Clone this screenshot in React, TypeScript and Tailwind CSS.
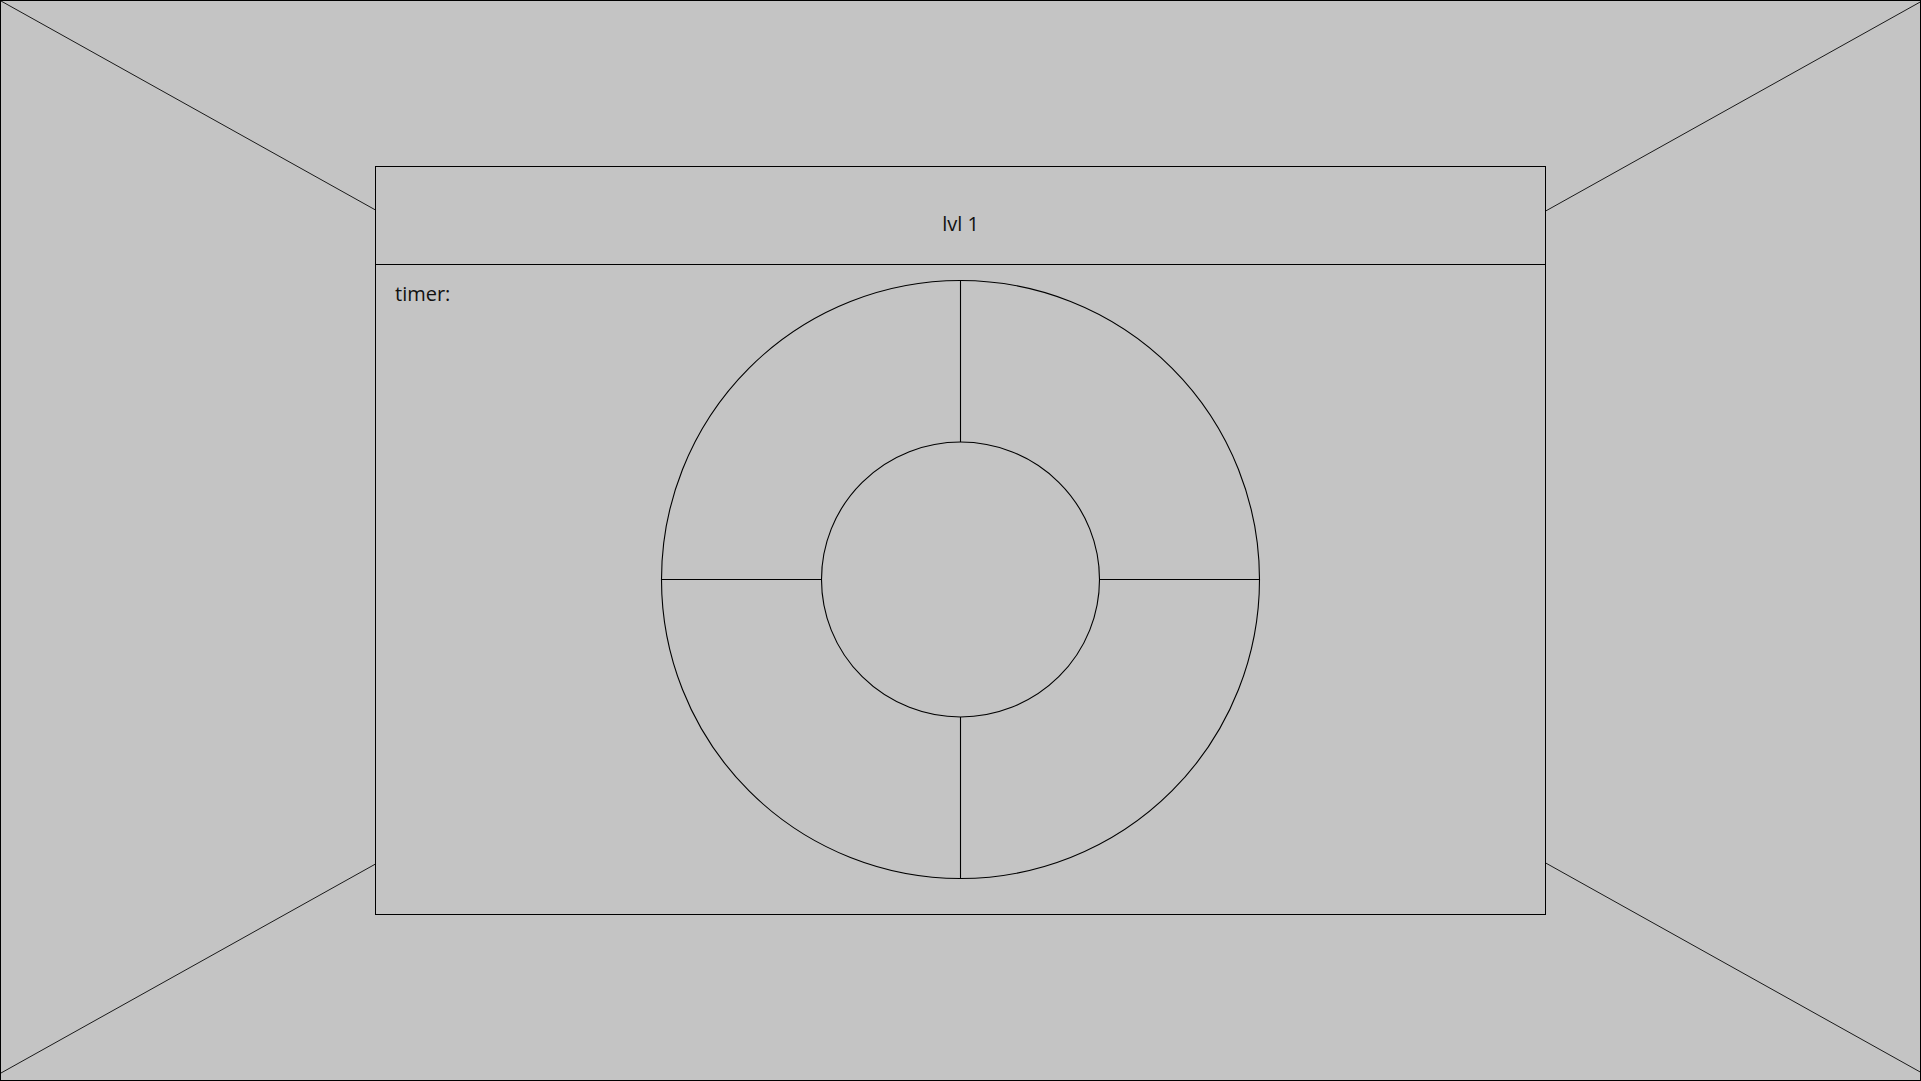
import React from 'react';

// wireframe: outer frame with perspective lines, level panel with a dial
const Backdrop: React.FC = () => (
  <svg
    className="absolute inset-0 pointer-events-none"
    width={1921}
    height={1081}
    viewBox="0 0 1921 1081"
  >
    <g stroke="#1a1a1a" strokeWidth={1}>
      <line x1={0} y1={0} x2={960.5} y2={536} />
      <line x1={1921} y1={0} x2={960.5} y2={536} />
      <line x1={0} y1={1072} x2={960.5} y2={536} />
      <line x1={1921} y1={1072} x2={960.5} y2={536} />
    </g>
  </svg>
);

const Dial: React.FC = () => (
  <svg width={601} height={601} viewBox="0 0 601 601" className="block">
    <g stroke="#000" strokeWidth={1.1} fill="none">
      <circle cx={300.5} cy={300.5} r={299} />
      <ellipse cx={300.5} cy={300.5} rx={139} ry={137.5} />
      <line x1={300.5} y1={1.5} x2={300.5} y2={163} />
      <line x1={300.5} y1={438} x2={300.5} y2={599.5} />
      <line x1={1.5} y1={300.5} x2={161.5} y2={300.5} />
      <line x1={439.5} y1={300.5} x2={599.5} y2={300.5} />
    </g>
  </svg>
);

export default function App() {
  return (
    <div
      className="relative w-[1921px] h-[1081px] overflow-hidden border border-black bg-[#c4c4c4] text-[#111]"
      style={{ fontFamily: '"Open Sans", "Noto Sans", sans-serif' }}
    >
      <Backdrop />

      <div className="relative ml-[374px] mt-[165px] w-[1171px] h-[749px] border border-black bg-[#c4c4c4] flex flex-col">
        <div className="h-[98px] shrink-0 border-b border-black flex items-center justify-center pt-[17px]">
          <span className="text-[20px] leading-none">lvl 1</span>
        </div>

        <div className="relative flex-1 flex justify-center pt-[14px]">
          <span className="absolute left-[19px] top-[19px] text-[20px] leading-none">timer:</span>
          <Dial />
        </div>
      </div>
    </div>
  );
}
